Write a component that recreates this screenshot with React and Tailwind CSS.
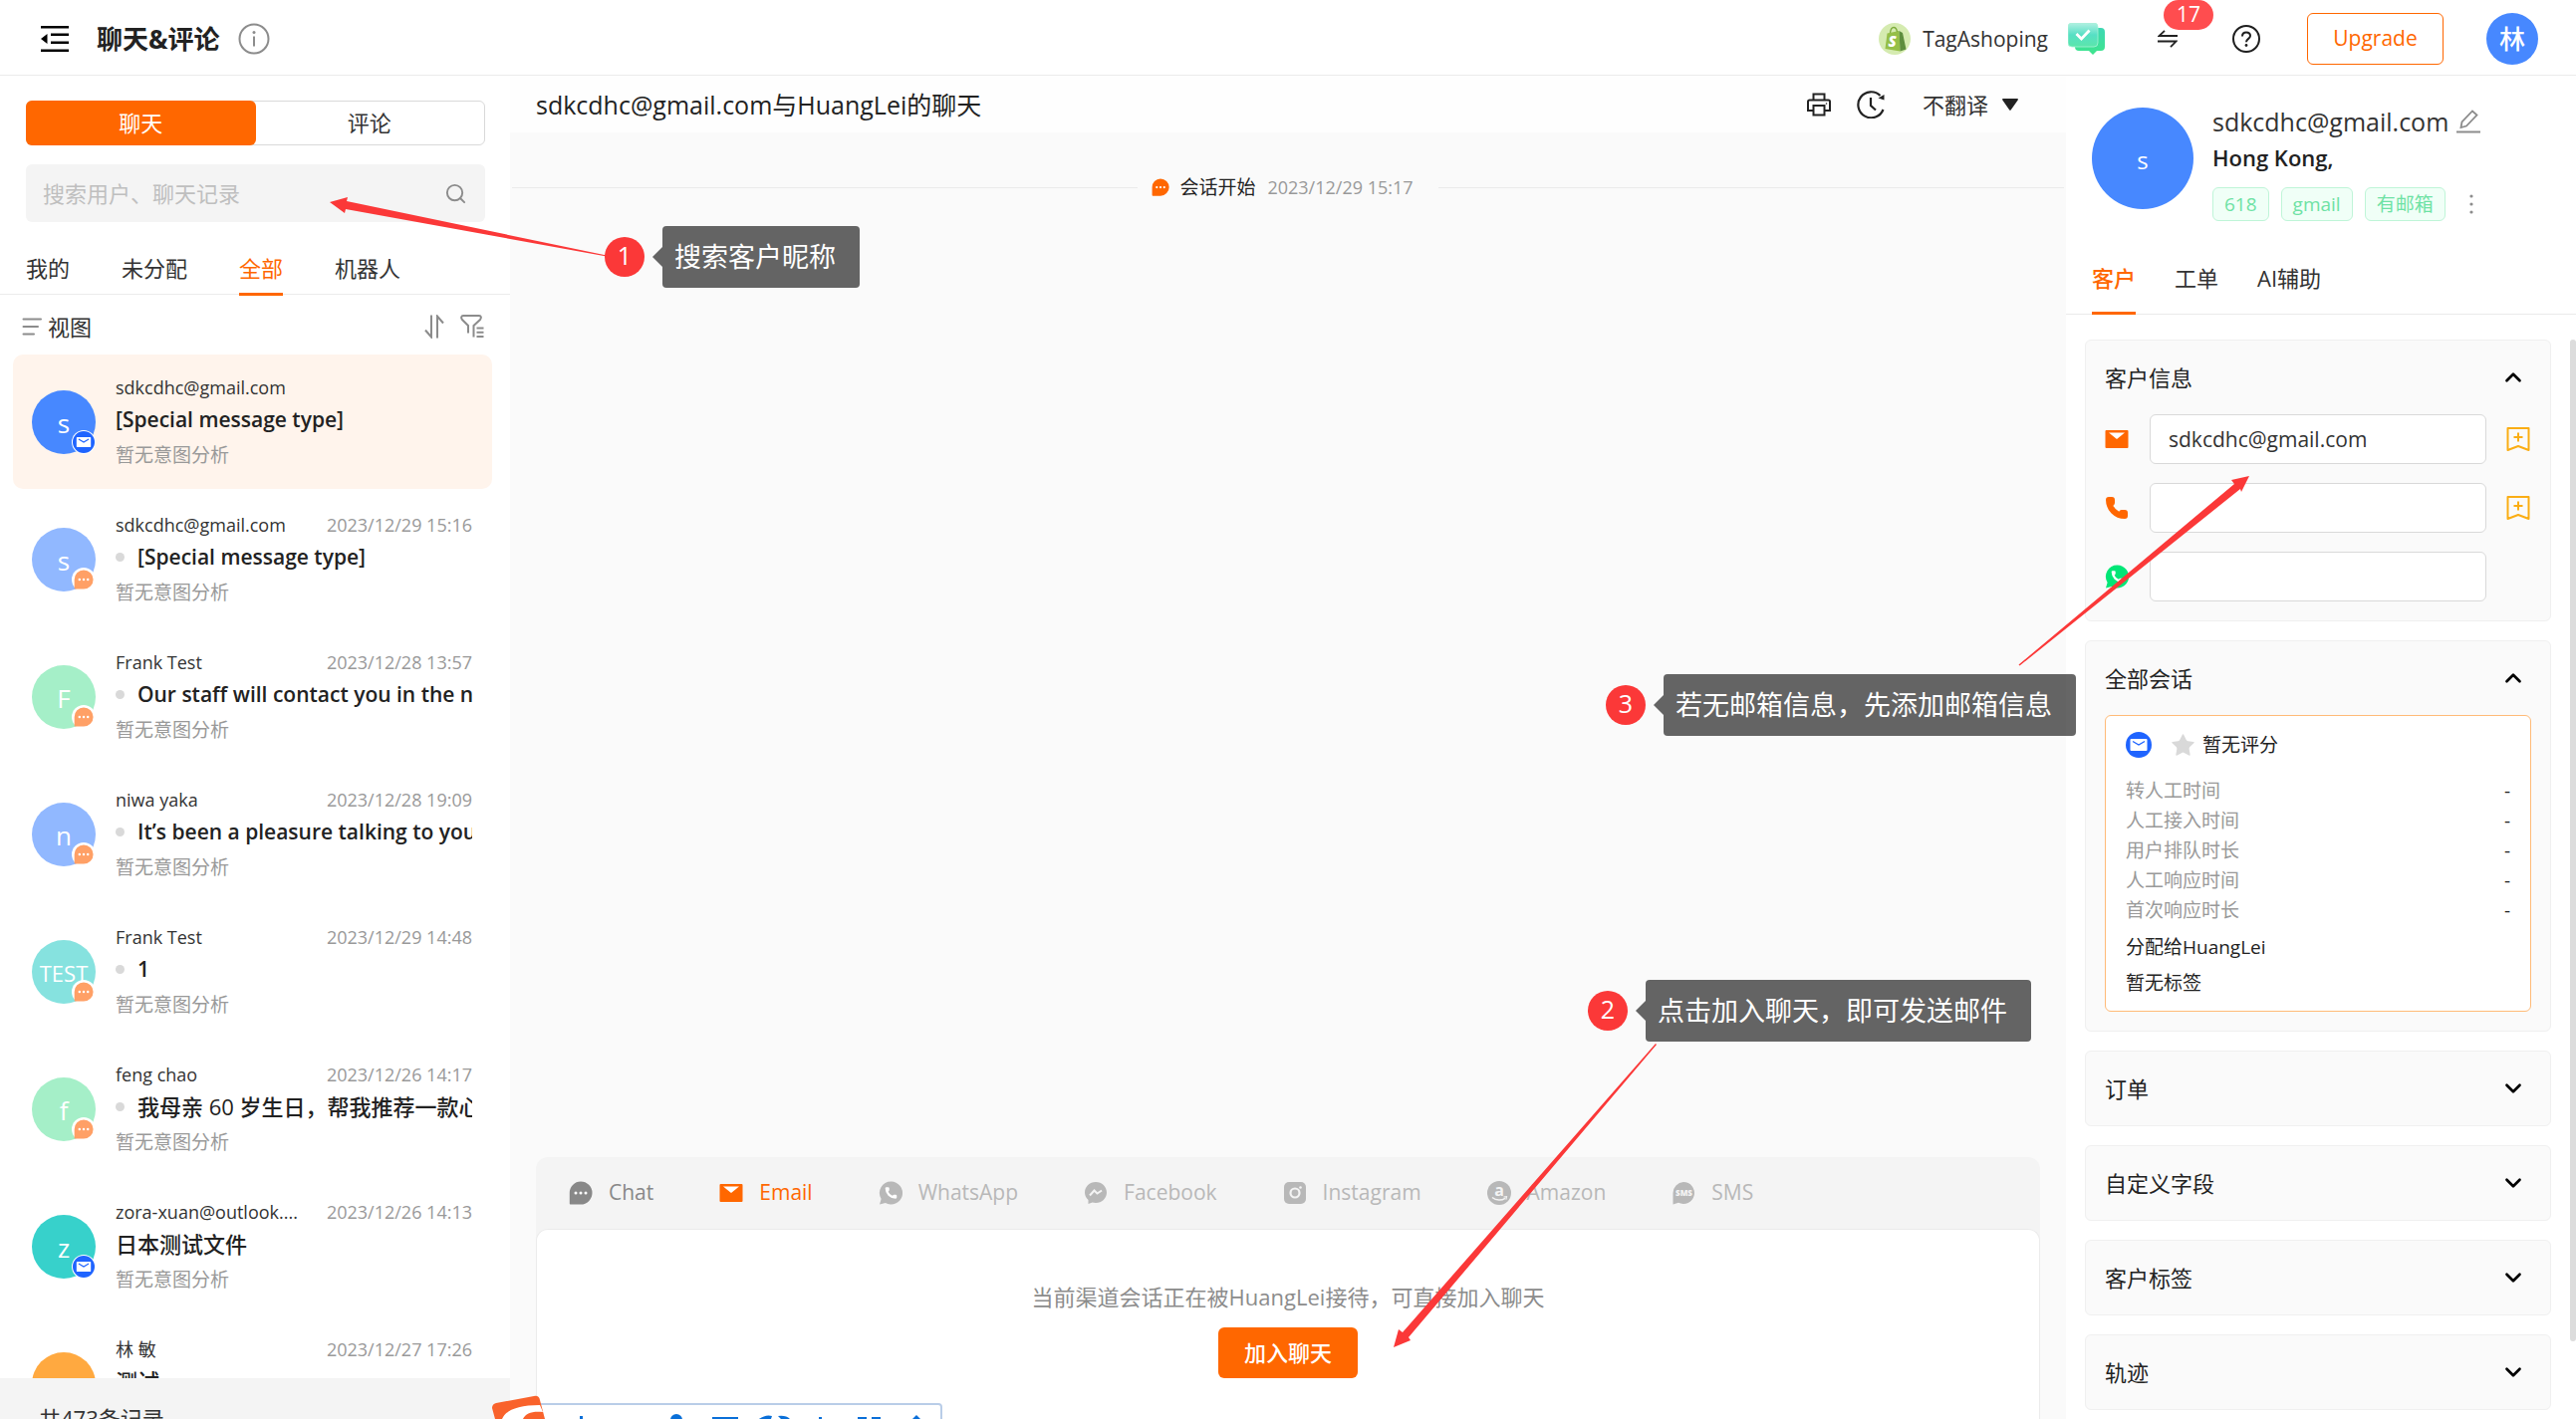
import React from 'react';
import clsx from 'clsx';
import { ChevronDown, ChevronUp, Phone, Search, Star } from 'lucide-react';

const PHONE_PATH =
  'M13.832 16.568a1 1 0 0 0 1.213-.303l.355-.465A2 2 0 0 1 17 15h3a2 2 0 0 1 2 2v3a2 2 0 0 1-2 2A18 18 0 0 1 2 4a2 2 0 0 1 2-2h3a2 2 0 0 1 2 2v3a2 2 0 0 1-.8 1.6l-.468.351a1 1 0 0 0-.292 1.233 14 14 0 0 0 6.392 6.384';

const NO_INTENT = '暂无意图分析';

const conversations = [
  { name: 'sdkcdhc@gmail.com', time: '', text: '[Special message type]', intent: NO_INTENT, avatar: 's', color: 'bg-[#4788ff]', channel: 'mail', active: true },
  { name: 'sdkcdhc@gmail.com', time: '2023/12/29 15:16', text: '[Special message type]', intent: NO_INTENT, avatar: 's', color: 'bg-[#91b8ff]', channel: 'chat', dot: true },
  { name: 'Frank Test', time: '2023/12/28 13:57', text: 'Our staff will contact you in the next', intent: NO_INTENT, avatar: 'F', color: 'bg-[#a5efc8]', channel: 'chat', dot: true },
  { name: 'niwa yaka', time: '2023/12/28 19:09', text: 'It’s been a pleasure talking to you', intent: NO_INTENT, avatar: 'n', color: 'bg-[#91b8ff]', channel: 'chat', dot: true },
  { name: 'Frank Test', time: '2023/12/29 14:48', text: '1', intent: NO_INTENT, avatar: 'TEST', color: 'bg-[#86e2df]', channel: 'chat', dot: true },
  { name: 'feng chao', time: '2023/12/26 14:17', text: '我母亲 60 岁生日，帮我推荐一款心', intent: NO_INTENT, avatar: 'f', color: 'bg-[#a5efc8]', channel: 'chat', dot: true, cjk: true },
  { name: 'zora-xuan@outlook....', time: '2023/12/26 14:13', text: '日本测试文件', intent: NO_INTENT, avatar: 'z', color: 'bg-[#37d1cb]', channel: 'mail', cjk: true },
  { name: '林 敏', time: '2023/12/27 17:26', text: '测试', avatar: 'TEST', color: 'bg-[#ffa940]', channel: 'mail', cjk: true },
];

const stats = ['转人工时间', '人工接入时间', '用户排队时长', '人工响应时间', '首次响应时长'];

/* ---------- icons ---------- */

const ChatBubble = ({ className, dots = '#fff' }) => (
  <svg viewBox="0 0 24 24" className={className} aria-hidden="true">
    <path d="M12 0.5a11.5 11.5 0 1 1 0 23H1.8c-.6 0-1-.4-1-1V12A11.3 11.3 0 0 1 12 .5z" fill="currentColor" />
    <circle cx="7" cy="12" r="1.5" fill={dots} />
    <circle cx="12" cy="12" r="1.5" fill={dots} />
    <circle cx="17" cy="12" r="1.5" fill={dots} />
  </svg>
);

const MailSquare = ({ className }) => (
  <svg viewBox="0 0 24 20" className={className} aria-hidden="true">
    <rect x="0.5" y="1" width="23" height="18" rx="1" fill="currentColor" />
    <path d="M4 3.5h16l-8 6.5z" fill="#fff" />
  </svg>
);

const MailCircle = ({ className }) => (
  <svg viewBox="0 0 26 26" className={className} aria-hidden="true">
    <circle cx="13" cy="13" r="13" fill="#1f64ff" />
    <rect x="4.5" y="7" width="17" height="12" rx="1" fill="#fff" />
    <path d="M7 9.5l6 3.5 6-3.5" fill="none" stroke="#1f64ff" strokeWidth="1.4" />
  </svg>
);

const WhatsAppSolid = ({ className }) => (
  <svg viewBox="0 0 24 24" className={className} aria-hidden="true">
    <path d="M12.5.5a11.500 11.500 0 1 1-5.600 21.500L1 23.500l1.600-5.600A11.500 11.500 0 0 1 12.5.5z" fill="currentColor" />
    <path d={PHONE_PATH} fill="#fff" transform="translate(5.5 5) scale(.58)" />
  </svg>
);

const MessengerSolid = ({ className }) => (
  <svg viewBox="0 0 24 24" className={className} aria-hidden="true">
    <path d="M12 1c6.300 0 11 4.700 11 10.500S18.300 22 12 22c-1.200 0-2.300-.2-3.400-.5L4.500 23v-4C2.400 17.200 1 14.600 1 11.500 1 5.700 5.700 1 12 1z" fill="currentColor" />
    <path d="M6 14.500l4.500-5 3 3 4.500-3" fill="none" stroke="#f4f4f4" strokeWidth="2" />
  </svg>
);

const InstagramSolid = ({ className }) => (
  <svg viewBox="0 0 24 24" className={className} aria-hidden="true">
    <rect x="1" y="1" width="22" height="22" rx="5" fill="currentColor" />
    <circle cx="12" cy="12" r="4.5" fill="none" stroke="#f4f4f4" strokeWidth="2.2" />
    <circle cx="17.5" cy="6.5" r="1.3" fill="#f4f4f4" />
  </svg>
);

const AmazonSolid = ({ className }) => (
  <svg viewBox="0 0 24 24" className={className} aria-hidden="true">
    <circle cx="12" cy="12" r="12" fill="currentColor" />
    <text x="12" y="15" textAnchor="middle" fontSize="16" fontWeight="700" fill="#f4f4f4">a</text>
    <path d="M5 16.500c4 3.300 9.500 3.300 13 .8" fill="none" stroke="#f4f4f4" strokeWidth="1.5" />
    <path d="M16.500 16l3-.3-.6 3" fill="none" stroke="#f4f4f4" strokeWidth="1.2" />
  </svg>
);

const SmsSolid = ({ className }) => (
  <svg viewBox="0 0 24 24" className={className} aria-hidden="true">
    <path d="M12 1a11 11 0 1 1-5 20.800L1.500 23.500V12A11 11 0 0 1 12 1z" fill="currentColor" />
    <text x="12.5" y="15" textAnchor="middle" fontSize="8" fontWeight="800" fill="#f4f4f4">SMS</text>
  </svg>
);

const CollapseIcon = () => (
  <svg viewBox="0 0 28 26" className="h-[26px] w-7" fill="#000" aria-hidden="true">
    <rect width="28" height="2.5" />
    <rect x="10" y="7.5" width="18" height="2.5" />
    <rect x="10" y="15.5" width="18" height="2.5" />
    <rect y="23.5" width="28" height="2.5" />
    <path d="M6.500 8v10L0 13z" />
  </svg>
);

const InfoIcon = () => (
  <svg viewBox="0 0 32 32" className="size-8" fill="none" stroke="#8c8c8c" aria-hidden="true">
    <circle cx="16" cy="16" r="14.5" strokeWidth="2" />
    <path d="M16 13.500v10" strokeWidth="2" />
    <circle cx="16" cy="9.5" r="1.5" fill="#8c8c8c" stroke="none" />
  </svg>
);

const ShopLogo = () => (
  <svg viewBox="0 0 32 32" className="size-8" aria-hidden="true">
    <circle cx="16" cy="16" r="16" fill="#d5ebb0" />
    <path d="M8.500 10.500L20.500 8l1 20.500-15-2.500z" fill="#95bf47" />
    <path d="M20.500 8l3.500 2 3.500 16.500-6 2z" fill="#5e8e3e" />
    <path d="M11.500 10c.5-4 2-5.500 3.500-5.500s3 1.500 3.500 4.500" fill="none" stroke="#7dab3a" strokeWidth="1.3" />
    <text x="13.5" y="24" textAnchor="middle" fontSize="15" fontWeight="800" fontStyle="italic" fill="#fff">S</text>
  </svg>
);

const CheckBubble = () => (
  <svg viewBox="0 0 38 32" className="h-8 w-[38px]" aria-hidden="true">
    <defs>
      <linearGradient id="bubbleBack" x1="0" y1="0" x2="0" y2="1">
        <stop offset="0" stopColor="#3ed7b4" />
        <stop offset="1" stopColor="#3ee58c" />
      </linearGradient>
      <linearGradient id="bubbleFront" x1="0" y1="0" x2="0" y2="1">
        <stop offset="0" stopColor="#b3f0e2" />
        <stop offset=".5" stopColor="#56dfc4" />
        <stop offset="1" stopColor="#5be6ab" />
      </linearGradient>
    </defs>
    <path d="M11 5h22a4 4 0 0 1 4 4v15a4 4 0 0 1-4 4h-4l-4 4-4-4H11a4 4 0 0 1-4-4V9a4 4 0 0 1 4-4z" fill="url(#bubbleBack)" />
    <rect x="0" y="0" width="30" height="24" rx="4" fill="url(#bubbleFront)" stroke="#a5f2d6" strokeWidth=".8" />
    <path d="M8.500 11l5 5 8-8.500" fill="none" stroke="#fff" strokeWidth="2.8" />
  </svg>
);

const SwapIcon = () => (
  <svg viewBox="0 0 20 18" className="h-[18px] w-5" fill="none" stroke="#222" strokeWidth="1.8" aria-hidden="true">
    <path d="M20 6H1.500L7 .8M0 11.500h18.500L13 17.200" />
  </svg>
);

const HelpIcon = () => (
  <svg viewBox="0 0 28 28" className="size-7" fill="none" stroke="#1f1f1f" strokeWidth="2" aria-hidden="true">
    <circle cx="14" cy="14" r="13" />
    <path d="M10 11.500c0-2.500 1.700-4 4-4s4 1.500 4 3.600c0 2.800-4 2.800-4 6.200" />
    <circle cx="14" cy="20.5" r="1.4" fill="#1f1f1f" stroke="none" />
  </svg>
);

const PrintIcon = () => (
  <svg viewBox="0 0 24 24" className="size-6" fill="none" stroke="#222" strokeWidth="2" aria-hidden="true">
    <path d="M6.500 7.500V1.500h11v6M6.500 18H1V9a1.500 1.500 0 0 1 1.500-1.500h19A1.500 1.500 0 0 1 23 9v9h-5.500" />
    <rect x="6.5" y="13" width="11" height="9.5" />
    <circle cx="19.5" cy="11" r=".8" fill="#222" stroke="none" />
  </svg>
);

const HistoryIcon = () => (
  <svg viewBox="0 0 28 28" className="size-7" fill="none" stroke="#222" strokeWidth="2.2" aria-hidden="true">
    <path d="M26.500 19A13 13 0 1 1 23.500 5" />
    <path d="M27.500 4v5.500l-6-2z" fill="#222" stroke="none" />
    <path d="M14 7v8l5 4.500" />
  </svg>
);

const PencilIcon = () => (
  <svg viewBox="0 0 24 24" className="size-6" fill="none" stroke="#8c8c8c" strokeWidth="1.8" aria-hidden="true">
    <path d="M4.500 18L5.500 12.500 16 1.500l4.500 4L10 16.500z" />
    <path d="M0 22.500h24" strokeWidth="2" />
  </svg>
);

const ViewIcon = () => (
  <svg viewBox="0 0 20 18" className="h-[18px] w-5" stroke="#8c8c8c" strokeWidth="2" strokeLinecap="round" aria-hidden="true">
    <path d="M1.500 1.500h17.500M1.500 9h14.500M1.500 16.500h10.500" />
  </svg>
);

const SortIcon = () => (
  <svg viewBox="0 0 20 24" className="h-6 w-5" fill="none" stroke="#8c8c8c" strokeWidth="2" aria-hidden="true">
    <path d="M7 .5v22L1 15.500M13 23.500v-22l6 7" />
  </svg>
);

const FilterIcon = () => (
  <svg viewBox="0 0 24 24" className="size-6" fill="none" stroke="#8c8c8c" strokeWidth="2" aria-hidden="true">
    <path d="M8 18.500V11L2 5c-1.500-2-.8-4 1-4h16c2 0 2.500 2 1 4l-6.500 6v11.500" />
    <path d="M16.500 13.500H23.500M16.500 17.800H23.500M16.500 22H23.500" />
  </svg>
);

const BookmarkAddIcon = () => (
  <svg viewBox="0 0 24 24" className="size-6" fill="none" stroke="#faad14" strokeWidth="2" aria-hidden="true">
    <path d="M1.500 1h21v22L12 19 1.500 23z" strokeLinejoin="round" />
    <path d="M12 5.500v9M7.500 10h9" />
  </svg>
);

/* ---------- header ---------- */

function Header() {
  return (
    <header className="flex h-[76px] shrink-0 items-center border-b border-[#ebebeb] bg-white pt-0.5 pr-[38px] pl-[41px]">
      <button type="button" aria-label="收起菜单"><CollapseIcon /></button>
      <h1 className="ml-7 text-[26px] leading-8 font-bold text-[#222]">聊天&amp;评论</h1>
      <button type="button" aria-label="说明" className="ml-[18px]"><InfoIcon /></button>
      <div className="ml-auto flex items-center">
        <ShopLogo />
        <span className="ml-3 text-[21px] leading-8 text-[#333]">TagAshoping</span>
        <button type="button" aria-label="评论" className="ml-5"><CheckBubble /></button>
        <button type="button" aria-label="通知" className="relative ml-[52px]">
          <SwapIcon />
          <span className="absolute bottom-full left-1.5 flex h-[30px] w-[50px] items-center justify-center rounded-full bg-[#ff4d4f] text-[21px] leading-none text-white">
            17
          </span>
        </button>
        <button type="button" aria-label="帮助" className="ml-[55px]"><HelpIcon /></button>
        <button type="button" className="ml-[47px] h-[52px] w-[137px] rounded-md border border-[#ff6700] text-[21px] text-[#ff6700]">
          Upgrade
        </button>
        <button type="button" className="ml-[43px] size-[52px] rounded-full bg-[#4788ff] text-[26px] leading-none font-medium text-white">
          林
        </button>
      </div>
    </header>
  );
}

/* ---------- sidebar ---------- */

function Conversation({ item }) {
  return (
    <li
      className={clsx(
        'flex h-[135px] shrink-0 items-center rounded-[10px] pr-5 pl-[19px]',
        item.active && 'bg-[#fff4ec]'
      )}
    >
      <div className={clsx('relative flex size-16 shrink-0 items-center justify-center rounded-full pt-0.5 leading-none text-white', item.color, item.avatar === 'TEST' ? 'text-[22px]' : 'text-[26px]')}>
        {item.avatar}
        <span className="absolute right-0 bottom-0 flex size-6 items-center justify-center rounded-full bg-white">
          {item.channel === 'mail' ? <MailCircle className="size-[22px]" /> : <ChatBubble className="size-5 text-[#ffa066]" />}
        </span>
      </div>
      <div className="ml-5 min-w-0 flex-1 self-start pt-[19px]">
        <div className="flex justify-between text-[18px] leading-7 text-[#333]">
          <span>{item.name}</span>
          {item.time && <time className="text-[#999]">{item.time}</time>}
        </div>
        <p
          className={clsx(
            'mt-0.5 mb-1.5 flex items-center overflow-hidden leading-8 whitespace-nowrap text-[#222]',
            item.cjk ? 'text-[22px] font-medium' : 'text-[21px] font-semibold'
          )}
        >
          {item.dot && <i className="mr-[13px] size-[9px] shrink-0 rounded-full bg-[#d9d9d9]" />}
          {item.text}
        </p>
        {item.intent && <p className="text-[19px] leading-7 text-[#999]">{item.intent}</p>}
      </div>
    </li>
  );
}

function Sidebar() {
  const tabs = ['我的', '未分配', '全部', '机器人'];
  return (
    <aside className="flex w-[512px] shrink-0 flex-col bg-white">
      <div className="mt-[25px] mr-[25px] ml-[26px] flex h-[45px] rounded-md border border-[#d9d9d9] text-[22px]">
        <button type="button" className="-m-px flex-1 rounded-md bg-[#ff6700] text-white">聊天</button>
        <button type="button" className="flex-1 text-[#333]">评论</button>
      </div>
      <label className="mt-[19px] mr-[25px] ml-[26px] flex h-[58px] items-center rounded-md bg-[#f4f4f4] pr-[18px] pl-[17px]">
        <input
          type="search"
          aria-label="搜索"
          placeholder="搜索用户、聊天记录"
          className="min-w-0 flex-1 bg-transparent text-[22px] outline-none placeholder:text-[#bfbfbf]"
        />
        <Search className="size-[23px] text-[#8c8c8c]" strokeWidth={2} />
      </label>
      <nav className="mt-5 flex h-[53px] gap-[52px] border-b border-[#ebebeb] px-[26px] text-[22px] text-[#333]">
        {tabs.map((tab) => (
          <button
            key={tab}
            type="button"
            className={clsx('-mb-0.5 border-b-3 pt-0.5', tab === '全部' ? 'border-[#ff6700] text-[#ff6700]' : 'border-transparent')}
          >
            {tab}
          </button>
        ))}
      </nav>
      <div className="flex h-[60px] items-center pt-1 pr-[26px] pl-[22px]">
        <button type="button" className="flex items-center gap-1.5 text-[22px] text-[#333]">
          <ViewIcon />
          视图
        </button>
        <button type="button" aria-label="排序" className="ml-auto"><SortIcon /></button>
        <button type="button" aria-label="筛选" className="ml-4"><FilterIcon /></button>
      </div>
      <ul className="flex min-h-0 flex-1 flex-col gap-[3px] overflow-hidden pr-[18px] pl-[13px]">
        {conversations.map((item, index) => (
          <Conversation key={index} item={item} />
        ))}
      </ul>
      <footer className="h-[41px] shrink-0 overflow-hidden bg-[#f4f4f4] pt-6 pl-[39px] text-[22px] leading-8 text-[#333]">
        共473条记录
      </footer>
    </aside>
  );
}

/* ---------- conversation ---------- */

const channels = [
  { label: 'Chat', Icon: ChatBubble, color: 'text-[#888]' },
  { label: 'Email', Icon: MailSquare, color: 'text-[#ff6700]' },
  { label: 'WhatsApp', Icon: WhatsAppSolid, color: 'text-[#b8b8b8]' },
  { label: 'Facebook', Icon: MessengerSolid, color: 'text-[#b8b8b8]' },
  { label: 'Instagram', Icon: InstagramSolid, color: 'text-[#b8b8b8]' },
  { label: 'Amazon', Icon: AmazonSolid, color: 'text-[#b8b8b8]' },
  { label: 'SMS', Icon: SmsSolid, color: 'text-[#b8b8b8]' },
];

function ChatPanel() {
  return (
    <main className="flex min-w-0 flex-1 flex-col bg-[#fafafa]">
      <div className="flex h-[57px] shrink-0 items-center bg-[#fefefe] pr-12 pl-[26px]">
        <h2 className="text-[25px] leading-8 text-[#222]">sdkcdhc@gmail.com与HuangLei的聊天</h2>
        <button type="button" aria-label="打印" className="ml-auto"><PrintIcon /></button>
        <button type="button" aria-label="历史" className="ml-[26px]"><HistoryIcon /></button>
        <label className="relative ml-[38px] flex items-center">
          <select aria-label="翻译" className="w-24 appearance-none bg-transparent text-[22px] leading-8 text-[#333] outline-none">
            <option>不翻译</option>
          </select>
          <svg viewBox="0 0 16 12" className="pointer-events-none absolute right-0 h-3 w-4" fill="#222" aria-hidden="true">
            <path d="M1 0h14c1 0 1.200.8.700 1.500L8.800 11.300c-.5.700-1.200.7-1.700 0L.3 1.500C-.2.800 0 0 1 0z" />
          </svg>
        </label>
      </div>

      <div className="flex min-h-0 flex-1 flex-col">
        <div className="mx-0.5 mt-[39px] flex items-center">
          <hr className="flex-1 border-[#ebebeb]" />
          <ChatBubble className="ml-3.5 size-[18px] text-[#ff6700]" />
          <span className="ml-2.5 text-[19px] leading-8 text-[#222]">会话开始</span>
          <time className="mr-[25px] ml-3 text-[18px] leading-8 text-[#999]">2023/12/29 15:17</time>
          <hr className="flex-1 border-[#ebebeb]" />
        </div>
      </div>

      <section className="mx-[26px] flex h-[263px] shrink-0 flex-col rounded-t-xl bg-[#f4f4f4]">
        <div className="flex h-[72px] shrink-0 items-center gap-[66px] pl-[33px] text-[21px]">
          {channels.map(({ label, Icon, color }) => (
            <button key={label} type="button" className={clsx('flex items-center gap-4', color)}>
              <Icon className="size-6" />
              {label}
            </button>
          ))}
        </div>
        <div className="flex flex-1 flex-col items-center rounded-t-xl border border-b-0 border-[#ebebeb] bg-white pt-[51px]">
          <p className="text-[22px] leading-8 text-[#8c8c8c]">当前渠道会话正在被HuangLei接待，可直接加入聊天</p>
          <button type="button" className="mt-[15px] h-[51px] w-[140px] rounded-md bg-[#ff6700] text-[22px] font-medium text-white">
            加入聊天
          </button>
        </div>
      </section>
    </main>
  );
}

/* ---------- customer panel ---------- */

function Panel({ title, open = false, children }) {
  const Chevron = open ? ChevronUp : ChevronDown;
  return (
    <section className="rounded-md border border-[#f0f0f0] bg-[#fafafa] px-[19px]">
      <button type="button" aria-expanded={open} className="flex h-[74px] w-full items-center justify-between pr-[5px] text-[22px] text-[#222]">
        {title}
        <Chevron className="size-[26px] text-black" strokeWidth={2.5} />
      </button>
      {children}
    </section>
  );
}

function ContactField({ id, label, icon, value = '', bookmark }) {
  return (
    <div className="mb-[19px] flex h-[50px] items-center">
      <label htmlFor={id} aria-label={label} className="w-[45px]">{icon}</label>
      <input
        id={id}
        defaultValue={value}
        className="h-full w-[338px] rounded-md border border-[#d9d9d9] bg-white px-[18px] text-[21px] text-[#333] outline-none"
      />
      {bookmark && (
        <button type="button" aria-label="收藏" className="ml-5"><BookmarkAddIcon /></button>
      )}
    </div>
  );
}

function CustomerPanel() {
  const tags = ['618', 'gmail', '有邮箱'];
  return (
    <aside className="relative flex w-[512px] shrink-0 flex-col bg-white">
      <div className="mt-8 flex pl-[26px]">
        <div className="flex size-[102px] items-center justify-center rounded-full bg-[#4788ff] pt-1 text-[24px] text-white">s</div>
        <div className="-mt-1 ml-[19px]">
          <div className="flex items-center gap-2 text-[25px] leading-9 text-[#333]">
            sdkcdhc@gmail.com
            <button type="button" aria-label="编辑"><PencilIcon /></button>
          </div>
          <p className="text-[22px] leading-9 font-semibold text-[#222]">Hong Kong,</p>
          <div className="mt-3 flex items-center gap-3">
            {tags.map((tag) => (
              <span key={tag} className="flex h-[34px] items-center rounded-md border border-[#bff5d8] bg-[#f0fff7] px-[11px] text-[19px] leading-none text-[#6ee2a4]">
                {tag}
              </span>
            ))}
            <button type="button" aria-label="更多" className="ml-3">
              <svg viewBox="0 0 4 20" className="h-5 w-1" fill="#8c8c8c" aria-hidden="true">
                <circle cx="2" cy="2" r="1.6" />
                <circle cx="2" cy="10" r="1.6" />
                <circle cx="2" cy="18" r="1.6" />
              </svg>
            </button>
          </div>
        </div>
      </div>
      <nav className="mt-[23px] flex h-[71px] shrink-0 gap-[39px] border-b border-[#ebebeb] pl-[26px] text-[22px] text-[#333]">
        <button type="button" className="-mb-px border-b-3 border-[#ff6700] font-medium text-[#ff6700]">客户</button>
        <button type="button" className="pb-0.5">工单</button>
        <button type="button" className="pb-0.5">AI辅助</button>
      </nav>

      <div className="mt-[25px] flex min-h-0 flex-1 flex-col gap-[19px] overflow-hidden pr-[25px] pl-[19px]">
        <Panel title="客户信息" open>
          <ContactField id="email" label="邮箱" value="sdkcdhc@gmail.com" bookmark icon={<MailSquare className="h-5 w-6 text-[#ff6700]" />} />
          <ContactField id="phone" label="电话" bookmark icon={<Phone className="size-6 fill-[#ff6700] text-[#ff6700]" />} />
          <ContactField id="whatsapp" label="WhatsApp" icon={<WhatsAppSolid className="size-6 text-[#00e676]" />} />
        </Panel>
        <Panel title="全部会话" open>
          <div className="mb-[19px] rounded-md border border-[#ffbb78] bg-white px-5 pt-[11px] pb-2.5 text-[19px] text-[#222]">
            <div className="flex h-9 items-center">
              <MailCircle className="size-[26px]" />
              <Star className="ml-[18px] size-[27px] fill-[#d9d9d9] text-[#d9d9d9]" strokeWidth={0} />
              <span className="ml-1.5">暂无评分</span>
            </div>
            <dl className="mt-[13px] mb-1">
              {stats.map((label) => (
                <div key={label} className="flex justify-between leading-[30px]">
                  <dt className="text-[#999]">{label}</dt>
                  <dd>-</dd>
                </div>
              ))}
            </dl>
            <p className="leading-[36px]">分配给HuangLei</p>
            <p className="leading-[36px]">暂无标签</p>
          </div>
        </Panel>
        <Panel title="订单" />
        <Panel title="自定义字段" />
        <Panel title="客户标签" />
        <Panel title="轨迹" />
      </div>
      <div className="absolute top-[265px] right-0 h-[1006px] w-1.5 rounded-full bg-[#dcdcdc]" />
    </aside>
  );
}

/* ---------- guide steps and input-method bar, floating over the page ---------- */

function Step({ number, className, children }) {
  return (
    <div className={clsx('absolute flex items-center text-white', className)}>
      <span className="flex size-10 items-center justify-center rounded-full bg-[#fb3838] pb-1 text-[25px] leading-none">{number}</span>
      <svg viewBox="0 0 10 20" className="ml-2 h-5 w-2.5" fill="#000" fillOpacity=".6" aria-hidden="true">
        <path d="M10 0v20L0 10z" />
      </svg>
      <span className="rounded-sm bg-black/60 py-[13px] pr-6 pl-3 text-[27px] leading-9">{children}</span>
    </div>
  );
}

function Arrows() {
  return (
    <svg className="pointer-events-none absolute inset-0 size-full" fill="#fb3838" aria-hidden="true">
      <path d="M331 203l18-5-1 4L609 256.500v1L347 210l-1 4z" />
      <path d="M1399 1353l5-18 4 3L1662 1048l1 1L1414 1343l2 3z" />
      <path d="M2258 478l-18 4 3 4L2026.500 667.500l1 1L2249 491l1 3z" />
    </svg>
  );
}

function InputMethodBar() {
  return (
    <svg viewBox="0 0 460 24" className="absolute bottom-0 left-[492px] h-6 w-[460px]" aria-hidden="true">
      <rect x="20" y="9" width="433" height="40" rx="3" fill="#fff" stroke="#b9cde8" strokeWidth="2" />
      <path d="M2 13q0-4 4-5L44 1q5-1 6 4l5 19H5z" fill="#f9622b" />
      <path d="M12 24c4-9 16-14 38-14l3 7c-11-1-17 1-20 7z" fill="#fff" />
      <g fill="#0a6fd8">
        <rect x="90" y="21" width="3" height="3" />
        <circle cx="187" cy="25" r="6" />
        <rect x="223" y="22" width="26" height="2" />
        <path d="M270 24q7-5 13-3l-1 3zM289 21q8-1 12 3h-9z" />
        <rect x="330" y="22" width="3" height="2" />
        <rect x="369" y="22" width="9" height="2" />
        <rect x="383" y="22" width="9" height="2" />
        <path d="M424 24l4-4 4 4z" />
      </g>
    </svg>
  );
}

export default function App() {
  return (
    <div className="relative flex h-screen flex-col overflow-hidden bg-white font-['Open_Sans','Noto_Sans_CJK_SC',sans-serif]">
      <Header />
      <div className="flex min-h-0 flex-1">
        <Sidebar />
        <ChatPanel />
        <CustomerPanel />
      </div>
      <Arrows />
      <Step number={1} className="top-[227px] left-[607px]">搜索客户昵称</Step>
      <Step number={2} className="top-[984px] left-[1594px]">点击加入聊天，即可发送邮件</Step>
      <Step number={3} className="top-[677px] left-[1612px]">若无邮箱信息，先添加邮箱信息</Step>
      <InputMethodBar />
    </div>
  );
}
